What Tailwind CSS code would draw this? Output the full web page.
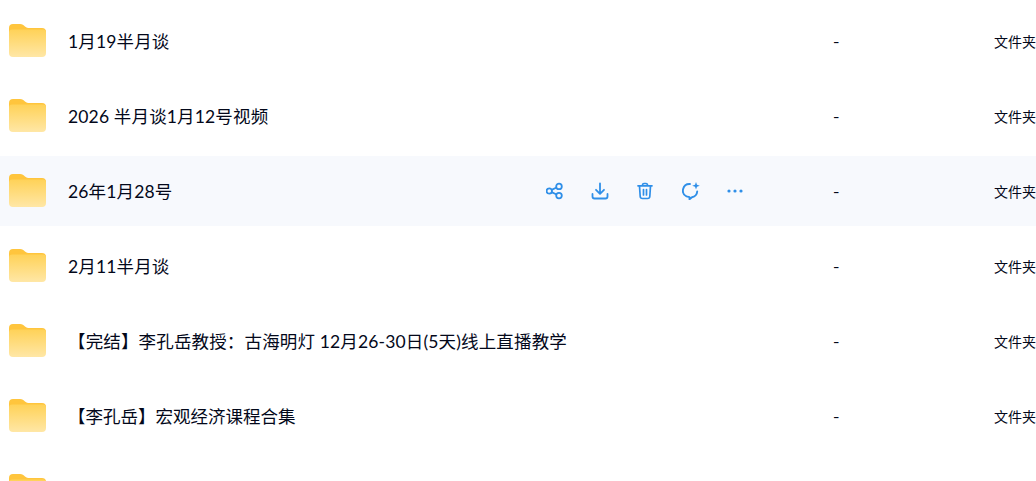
<!DOCTYPE html>
<html lang="zh-CN">
  <head>
    <meta charset="utf-8" />
    <title>文件列表</title>
    <script src="https://cdn.jsdelivr.net/npm/@tailwindcss/browser@4"></script>
  </head>
  <body class="h-[481px] overflow-hidden bg-white font-['Lato','Noto_Sans_CJK_SC',sans-serif] text-[#03081a]">
    <svg class="absolute h-0 w-0" aria-hidden="true">
      <defs>
        <linearGradient id="folder-back" x1="0" y1="0" x2="0" y2="1">
          <stop offset="0" stop-color="#ffc53d" />
          <stop offset="1" stop-color="#ffc53d" />
        </linearGradient>
        <linearGradient id="folder-front" x1="0" y1="0" x2="0" y2="1">
          <stop offset="0" stop-color="#ffd258" />
          <stop offset="1" stop-color="#ffe7a6" />
        </linearGradient>
      </defs>
    </svg>

    <main class="flex h-[481px] flex-col gap-[5px] overflow-hidden pt-[6px]">
      <div class="flex h-[70px] shrink-0 items-center pl-[9px]">
        <svg class="mb-[2px] h-[33px] w-[37px] shrink-0" viewBox="0 0 37 33">
          <path fill="url(#folder-back)" d="M0 4a4 4 0 0 1 4-4h7c2.500 0 3.500 1 5 2.500S18.500 4 21 4h12a4 4 0 0 1 4 4v8H0z" />
          <path fill="url(#folder-front)" d="M0 8.500a3 3 0 0 1 3-3h31a3 3 0 0 1 3 3V29a4 4 0 0 1-4 4H4a4 4 0 0 1-4-4z" />
        </svg>
        <span class="ml-[22px] w-[765px] pt-[2px] text-[17.500px] tracking-[.15px]">1月19半月谈</span>
        <span class="w-[161px] shrink-0 font-['Inter'] text-[14px]">-</span>
        <span class="whitespace-nowrap text-[14px]">文件夹</span>
      </div>

      <div class="flex h-[70px] shrink-0 items-center pl-[9px]">
        <svg class="mb-[2px] h-[33px] w-[37px] shrink-0" viewBox="0 0 37 33">
          <path fill="url(#folder-back)" d="M0 4a4 4 0 0 1 4-4h7c2.500 0 3.500 1 5 2.500S18.500 4 21 4h12a4 4 0 0 1 4 4v8H0z" />
          <path fill="url(#folder-front)" d="M0 8.500a3 3 0 0 1 3-3h31a3 3 0 0 1 3 3V29a4 4 0 0 1-4 4H4a4 4 0 0 1-4-4z" />
        </svg>
        <span class="ml-[22px] w-[765px] pt-[2px] text-[17.500px] tracking-[.15px]">2026 半月谈1月12号视频</span>
        <span class="w-[161px] shrink-0 font-['Inter'] text-[14px]">-</span>
        <span class="whitespace-nowrap text-[14px]">文件夹</span>
      </div>

      <div class="flex h-[70px] shrink-0 items-center bg-[#f7f9fd] pl-[9px]">
        <svg class="mb-[2px] h-[33px] w-[37px] shrink-0" viewBox="0 0 37 33">
          <path fill="url(#folder-back)" d="M0 4a4 4 0 0 1 4-4h7c2.500 0 3.500 1 5 2.500S18.500 4 21 4h12a4 4 0 0 1 4 4v8H0z" />
          <path fill="url(#folder-front)" d="M0 8.500a3 3 0 0 1 3-3h31a3 3 0 0 1 3 3V29a4 4 0 0 1-4 4H4a4 4 0 0 1-4-4z" />
        </svg>
        <span class="ml-[22px] w-[477.500px] pt-[2px] text-[17.500px] tracking-[.15px]">26年1月28号</span>
        <div class="flex w-[287.500px] shrink-0 items-center gap-[27.400px] text-[#2f8fe8]">
          <!-- share -->
          <svg class="h-[18px] w-[18px]" viewBox="0 0 18 18" fill="none" stroke="currentColor" stroke-width="1.800">
            <circle cx="3.300" cy="9" r="2.700" />
            <circle cx="13" cy="4.400" r="2.800" />
            <circle cx="13" cy="13.600" r="2.800" />
            <path d="M5.600 7.900l5-2.400M5.600 10.100l5 2.400" />
          </svg>
          <!-- download -->
          <svg class="h-[18px] w-[18px]" viewBox="0 0 18 18" fill="none" stroke="currentColor" stroke-width="1.800" stroke-linecap="round" stroke-linejoin="round">
            <path d="M9 1.500v10M5 7.800l4 4 4-4" />
            <path d="M1.500 12v2.500a2 2 0 0 0 2 2h11a2 2 0 0 0 2-2V12" />
          </svg>
          <!-- trash -->
          <svg class="h-[18px] w-[18px]" viewBox="0 0 18 18" fill="none" stroke="currentColor" stroke-width="1.700" stroke-linecap="round" stroke-linejoin="round">
            <path d="M2 3.800h14M6.500 3.500V2.800a1.500 1.500 0 0 1 1.500-1.300h2a1.500 1.500 0 0 1 1.500 1.300v.7" />
            <path d="M3.500 4l.7 10.500a2.200 2.200 0 0 0 2.200 2h5.200a2.200 2.200 0 0 0 2.200-2L14.500 4" />
            <path d="M7.500 7.500v5.500M10.500 7.500v5.500" />
          </svg>
          <!-- comment with spark -->
          <svg class="h-[18px] w-[18px]" viewBox="0 0 18 18" fill="none" stroke="currentColor" stroke-width="1.900" stroke-linecap="round" stroke-linejoin="round">
            <path d="M8 2H7.500A6.500 6.500 0 0 0 4.500 14.300L7.500 15.200V17.200L10 15.200C13 14.600 15 12.400 15.200 9.500" />
            <path fill="currentColor" stroke="none" d="M14 0l1 2.800 2.800 1-2.800 1-1 2.800-1-2.800-2.800-1 2.800-1z" />
          </svg>
          <!-- more -->
          <svg class="h-[18px] w-[18px] -translate-x-px" viewBox="0 0 18 18" fill="currentColor">
            <circle cx="3" cy="9" r="1.600" />
            <circle cx="9" cy="9" r="1.600" />
            <circle cx="15" cy="9" r="1.600" />
          </svg>
        </div>
        <span class="w-[161px] shrink-0 font-['Inter'] text-[14px]">-</span>
        <span class="whitespace-nowrap text-[14px]">文件夹</span>
      </div>

      <div class="flex h-[70px] shrink-0 items-center pl-[9px]">
        <svg class="mb-[2px] h-[33px] w-[37px] shrink-0" viewBox="0 0 37 33">
          <path fill="url(#folder-back)" d="M0 4a4 4 0 0 1 4-4h7c2.500 0 3.500 1 5 2.500S18.500 4 21 4h12a4 4 0 0 1 4 4v8H0z" />
          <path fill="url(#folder-front)" d="M0 8.500a3 3 0 0 1 3-3h31a3 3 0 0 1 3 3V29a4 4 0 0 1-4 4H4a4 4 0 0 1-4-4z" />
        </svg>
        <span class="ml-[22px] w-[765px] pt-[2px] text-[17.500px] tracking-[.15px]">2月11半月谈</span>
        <span class="w-[161px] shrink-0 font-['Inter'] text-[14px]">-</span>
        <span class="whitespace-nowrap text-[14px]">文件夹</span>
      </div>

      <div class="flex h-[70px] shrink-0 items-center pl-[9px]">
        <svg class="mb-[2px] h-[33px] w-[37px] shrink-0" viewBox="0 0 37 33">
          <path fill="url(#folder-back)" d="M0 4a4 4 0 0 1 4-4h7c2.500 0 3.500 1 5 2.500S18.500 4 21 4h12a4 4 0 0 1 4 4v8H0z" />
          <path fill="url(#folder-front)" d="M0 8.500a3 3 0 0 1 3-3h31a3 3 0 0 1 3 3V29a4 4 0 0 1-4 4H4a4 4 0 0 1-4-4z" />
        </svg>
        <span class="ml-[22px] w-[765px] pt-[2px] text-[17.500px] tracking-[.15px]">【完结】李孔岳教授：古海明灯 12月26-30日(5天)线上直播教学</span>
        <span class="w-[161px] shrink-0 font-['Inter'] text-[14px]">-</span>
        <span class="whitespace-nowrap text-[14px]">文件夹</span>
      </div>

      <div class="flex h-[70px] shrink-0 items-center pl-[9px]">
        <svg class="mb-[2px] h-[33px] w-[37px] shrink-0" viewBox="0 0 37 33">
          <path fill="url(#folder-back)" d="M0 4a4 4 0 0 1 4-4h7c2.500 0 3.500 1 5 2.500S18.500 4 21 4h12a4 4 0 0 1 4 4v8H0z" />
          <path fill="url(#folder-front)" d="M0 8.500a3 3 0 0 1 3-3h31a3 3 0 0 1 3 3V29a4 4 0 0 1-4 4H4a4 4 0 0 1-4-4z" />
        </svg>
        <span class="ml-[22px] w-[765px] pt-[2px] text-[17.500px]">【李孔岳】宏观经济课程合集</span>
        <span class="w-[161px] shrink-0 font-['Inter'] text-[14px]">-</span>
        <span class="whitespace-nowrap text-[14px]">文件夹</span>
      </div>

      <div class="flex h-[70px] shrink-0 items-center pl-[9px]">
        <svg class="mb-[2px] h-[33px] w-[37px] shrink-0" viewBox="0 0 37 33">
          <path fill="url(#folder-back)" d="M0 4a4 4 0 0 1 4-4h7c2.500 0 3.500 1 5 2.500S18.500 4 21 4h12a4 4 0 0 1 4 4v8H0z" />
          <path fill="url(#folder-front)" d="M0 8.500a3 3 0 0 1 3-3h31a3 3 0 0 1 3 3V29a4 4 0 0 1-4 4H4a4 4 0 0 1-4-4z" />
        </svg>
      </div>
    </main>
  </body>
</html>
